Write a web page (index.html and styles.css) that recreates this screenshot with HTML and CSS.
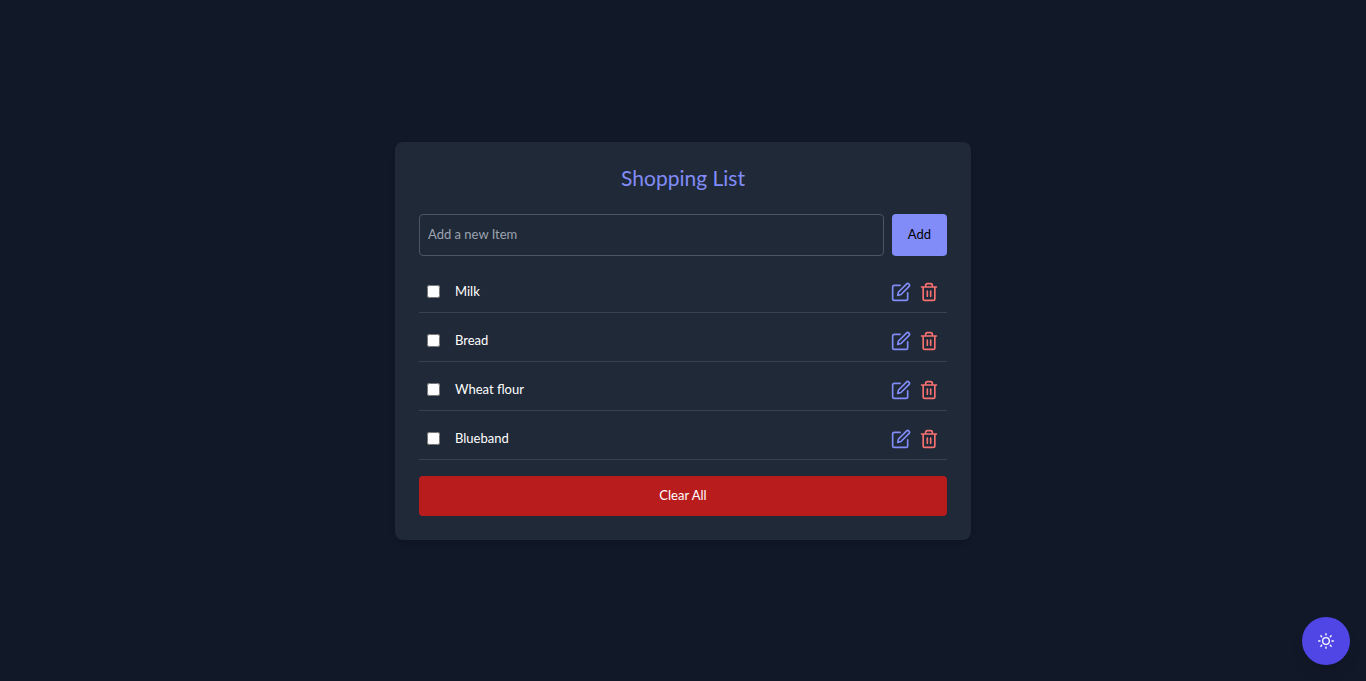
FILE: index.html
```html
<!DOCTYPE html>
<html lang="en">
<head>
<meta charset="utf-8">
<meta name="viewport" content="width=device-width, initial-scale=1">
<title>Shopping List</title>
<link rel="stylesheet" href="styles.css">
</head>
<body>
<svg class="sprite" aria-hidden="true">
  <symbol id="edit" viewBox="0 0 24 24"><path d="M11 4H4a2 2 0 0 0-2 2v14a2 2 0 0 0 2 2h14a2 2 0 0 0 2-2v-7"/><path d="M18.5 2.5a2.121 2.121 0 0 1 3 3L12 15l-4 1 1-4 9.5-9.5z"/></symbol>
  <symbol id="trash" viewBox="0 0 24 24"><path d="M3 6h18M19 6v14a2 2 0 0 1-2 2H7a2 2 0 0 1-2-2V6m3 0V4a2 2 0 0 1 2-2h4a2 2 0 0 1 2 2v2M10 11v6M14 11v6"/></symbol>
</svg>
<main class="card">
  <h1 class="title">Shopping List</h1>
  <form class="add-form">
    <input class="add-input" type="text" placeholder="Add a new Item" aria-label="Add a new Item">
    <button class="add-button" type="button">Add</button>
  </form>
  <ul class="items">
    <li class="item">
      <label class="item-label"><input class="check" type="checkbox"><span class="name">Milk</span></label>
      <button class="icon-button edit" type="button" aria-label="Edit Milk"><svg class="icon"><use href="#edit"/></svg></button>
      <button class="icon-button delete" type="button" aria-label="Delete Milk"><svg class="icon"><use href="#trash"/></svg></button>
    </li>
    <li class="item">
      <label class="item-label"><input class="check" type="checkbox"><span class="name">Bread</span></label>
      <button class="icon-button edit" type="button" aria-label="Edit Bread"><svg class="icon"><use href="#edit"/></svg></button>
      <button class="icon-button delete" type="button" aria-label="Delete Bread"><svg class="icon"><use href="#trash"/></svg></button>
    </li>
    <li class="item">
      <label class="item-label"><input class="check" type="checkbox"><span class="name">Wheat flour</span></label>
      <button class="icon-button edit" type="button" aria-label="Edit Wheat flour"><svg class="icon"><use href="#edit"/></svg></button>
      <button class="icon-button delete" type="button" aria-label="Delete Wheat flour"><svg class="icon"><use href="#trash"/></svg></button>
    </li>
    <li class="item">
      <label class="item-label"><input class="check" type="checkbox"><span class="name">Blueband</span></label>
      <button class="icon-button edit" type="button" aria-label="Edit Blueband"><svg class="icon"><use href="#edit"/></svg></button>
      <button class="icon-button delete" type="button" aria-label="Delete Blueband"><svg class="icon"><use href="#trash"/></svg></button>
    </li>
  </ul>
  <button class="clear-button" type="button">Clear All</button>
</main>
<button class="theme-button" type="button" aria-label="Switch to light theme">
  <svg class="icon icon-small" viewBox="0 0 24 24"><circle cx="12" cy="12" r="5"/><path d="M12 1v2M12 21v2M4.22 4.22l1.42 1.42M18.36 18.36l1.42 1.42M1 12h2M21 12h2M4.22 19.78l1.42-1.42M18.36 5.64l1.42-1.42"/></svg>
</button>
</body>
</html>
```
FILE: styles.css
```css
*, *::before, *::after { box-sizing: border-box; }

body {
  margin: 0;
  min-height: 100vh;
  display: flex;
  align-items: center;
  justify-content: center;
  background: #111827;
  color: #fff;
  font-family: Lato, "Open Sans", sans-serif;
  font-size: 13px;
  line-height: 24px;
}

button, input { font: inherit; color: inherit; }

button {
  border: 0;
  padding: 0;
  background: none;
  cursor: pointer;
}

.sprite { position: absolute; width: 0; height: 0; }

.card {
  width: 100%;
  max-width: 576px;
  padding: 24px;
  background: #1f2937;
  border-radius: 8px;
  box-shadow: 0 4px 6px -1px rgba(0, 0, 0, 0.1), 0 2px 4px -2px rgba(0, 0, 0, 0.1);
}

.title {
  margin: 0 0 16px;
  padding-bottom: 8px;
  color: #818cf8;
  font-size: 21px;
  font-weight: 400;
  line-height: 24px;
  text-align: center;
}

.add-form { display: flex; gap: 8px; margin-bottom: 16px; }

.add-input {
  flex: 1;
  min-width: 0;
  padding: 7px 8px 9px;
  background: transparent;
  border: 1px solid #4b5563;
  border-radius: 4px;
}

.add-input::placeholder { color: #9ca3af; opacity: 1; }

.add-button {
  padding: 8px 16px 10px;
  background: #818cf8;
  border-radius: 4px;
  color: #000;
}

.items {
  display: grid;
  gap: 8px;
  margin: 0 0 16px;
  padding: 0;
  list-style: none;
}

.item {
  display: flex;
  align-items: center;
  gap: 8px;
  padding: 8px;
  border-bottom: 1px solid #374151;
}

.item-label { display: flex; flex: 1; align-items: center; gap: 15px; }
.name { padding-bottom: 2px; line-height: 22px; }
.check { width: 13px; height: 13px; margin: 0; }
.icon-button { display: flex; }
.edit { color: #818cf8; }
.delete { color: #f87171; }

.icon {
  width: 20px;
  height: 20px;
  fill: none;
  stroke: currentColor;
  stroke-width: 2;
  stroke-linecap: round;
  stroke-linejoin: round;
}

.icon-small { width: 16px; height: 16px; }

.clear-button {
  display: block;
  width: 100%;
  padding: 7px 16px 9px;
  background: #b91c1c;
  border-radius: 4px;
}

.theme-button {
  position: fixed;
  right: 16px;
  bottom: 16px;
  display: flex;
  padding: 16px;
  background: #4f46e5;
  border-radius: 50%;
  box-shadow: 0 10px 15px -3px rgba(0, 0, 0, 0.1), 0 4px 6px -4px rgba(0, 0, 0, 0.1);
}
```
